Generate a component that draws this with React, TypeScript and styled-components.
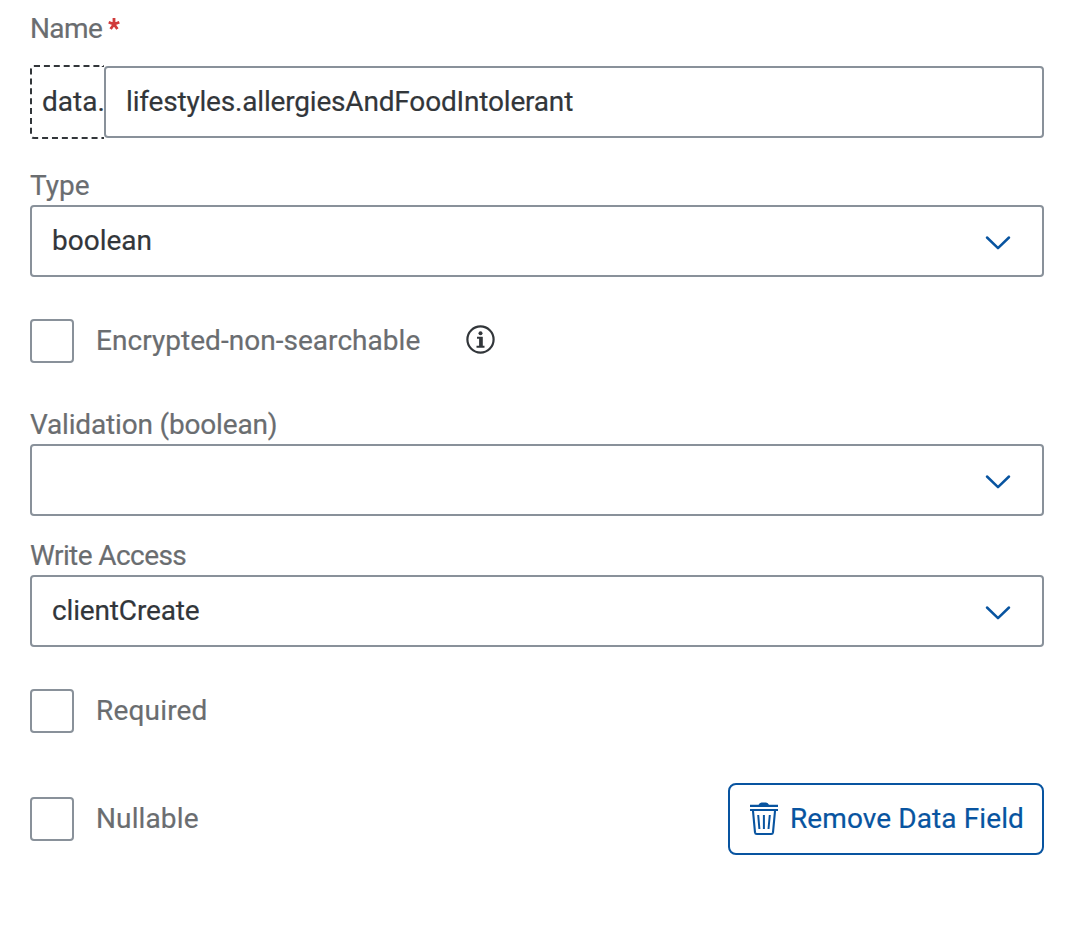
import React from "react";
import styled, { createGlobalStyle } from "styled-components";

const GlobalStyle = createGlobalStyle`
  *, *::before, *::after { box-sizing: border-box; }
  body { margin: 0; background: #fff; }
`;

const Form = styled.form`
  display: flex;
  flex-direction: column;
  width: 1078px;
  height: 946px;
  padding: 8px 34px 0 30px;
  background: #fff;
  color: #32363a;
  font: 400 28px/40px Roboto, "Liberation Sans", sans-serif;
`;

const Text = styled.span<{ $tracking?: number }>`
  letter-spacing: ${(p) => p.$tracking ?? 0}px;
  white-space: nowrap;
  -webkit-text-stroke: 0.2px currentColor;
`;

const Field = styled.div<{ $top?: number }>`
  display: flex;
  flex-direction: column;
  margin-top: ${(p) => p.$top ?? 0}px;
`;

const Label = styled.label`
  display: flex;
  height: 40px;
  padding-top: 1px;
  color: #6a6d70;
`;

const Asterisk = styled.svg`
  width: 12px;
  height: 12px;
  margin: 9px 0 0 6px;
`;

const PrefixedInput = styled.div`
  display: flex;
  align-items: center;
  height: 74px;
  margin-top: 17px;
`;

const Prefix = styled.div`
  width: 74px;
  height: 74px;
  padding: 15px 0 0 10px;
  border: 2px dashed #32363a;
  border-right: 0;
  border-radius: 4px 0 0 4px;
`;

const Control = styled.div`
  flex: 1 0 auto;
  display: flex;
  align-items: center;
  justify-content: space-between;
  height: 72px;
  padding: 0 31px 0 20px;
  border: 2px solid #89919a;
  border-radius: 4px;
  background: #fff;
`;

const Chevron = styled.svg`
  width: 26px;
  height: 16px;
  margin: 4px 0 0 auto;
`;

const CheckRow = styled.div<{ $top: number }>`
  display: flex;
  align-items: center;
  height: 44px;
  margin-top: ${(p) => p.$top}px;
  color: #6a6d70;
`;

const Box = styled.span`
  width: 44px;
  height: 44px;
  margin-right: 22px;
  border: 2px solid #89919a;
  border-radius: 4px;
`;

const CheckLabel = styled.label``;

const InfoIcon = styled.svg`
  width: 30px;
  height: 30px;
  margin: -4px 0 0 auto;
`;

const EncryptedRow = styled(CheckRow)`
  width: 465px;
`;

const Footer = styled.div`
  display: flex;
  justify-content: space-between;
  height: 72px;
  margin-top: 50px;
`;

const RemoveButton = styled.button`
  display: flex;
  align-items: center;
  width: 316px;
  height: 72px;
  padding: 0 0 0 20px;
  border: 2px solid #0854a0;
  border-radius: 8px;
  background: #fff;
  color: #0854a0;
  font: inherit;
`;

const TrashIcon = styled.svg`
  flex: none;
  width: 28px;
  height: 34px;
  margin: 0 12px 0 0;
`;

function Select({ value, tracking }: { value?: string; tracking?: number }) {
  return (
    <Control role="combobox">
      {value && <Text $tracking={tracking}>{value}</Text>}
      <Chevron viewBox="0 0 26 16" fill="none" stroke="#0854a0" strokeWidth="2.5" strokeLinecap="round" strokeLinejoin="round">
        <path d="M2 2.5 13 13.2 24 2.5" />
      </Chevron>
    </Control>
  );
}

export default function App() {
  return (
    <>
      <GlobalStyle />
      <Form>
        <Field>
          <Label>
            <Text $tracking={-0.6}>Name</Text>
            <Asterisk viewBox="0 0 12 12" stroke="#d03a3a" strokeWidth="2.8">
              <path d="M6 0v6.2M6 6.2.7 4.2M6 6.2l5.3-2M6 6.2 2.6 11M6 6.2 9.4 11" />
            </Asterisk>
          </Label>
          <PrefixedInput>
            <Prefix>
              <Text>data.</Text>
            </Prefix>
            <Control>
              <Text $tracking={-0.18}>lifestyles.allergiesAndFoodIntolerant</Text>
            </Control>
          </PrefixedInput>
        </Field>
        <Field $top={26}>
          <Label>
            <Text>Type</Text>
          </Label>
          <Select value="boolean" />
        </Field>
        <EncryptedRow $top={42}>
          <Box />
          <CheckLabel>
            <Text $tracking={0.04}>Encrypted-non-searchable</Text>
          </CheckLabel>
          <InfoIcon viewBox="-0.5 -0.5 30 30" fill="none" stroke="#32363a">
            <circle cx="15" cy="15" r="13.1" strokeWidth="2.2" />
            <circle cx="15" cy="8.8" r="2" fill="#32363a" stroke="none" />
            <path d="M11.5 13.2h4.6v8.6M11 22.2h8" strokeWidth="2" />
            <path d="M15.3 12.5v9.5" strokeWidth="3.4" />
          </InfoIcon>
        </EncryptedRow>
        <Field $top={41}>
          <Label>
            <Text $tracking={-0.17}>Validation (boolean)</Text>
          </Label>
          <Select />
        </Field>
        <Field $top={19}>
          <Label>
            <Text $tracking={-0.58}>Write Access</Text>
          </Label>
          <Select value="clientCreate" tracking={-0.15} />
        </Field>
        <CheckRow $top={42}>
          <Box />
          <CheckLabel>
            <Text $tracking={0.18}>Required</Text>
          </CheckLabel>
        </CheckRow>
        <Footer>
          <CheckRow $top={14}>
            <Box />
            <CheckLabel>
              <Text $tracking={0.12}>Nullable</Text>
            </CheckLabel>
          </CheckRow>
          <RemoveButton type="button">
            <TrashIcon viewBox="0 0 28 34" fill="none" stroke="#0854a0" strokeWidth="2">
              <path d="M0 3.8h28M0 8h28" strokeWidth="2.2" />
              <path d="M8.3 3.2Q9.5.4 11.5.4h4.5q2 0 3.2 2.8z" fill="#0854a0" stroke="none" />
              <path d="M2.9 8 5 30.4q.2 1.6 1.8 1.6h14.4q1.6 0 1.8-1.6L25.1 8" strokeWidth="2.1" />
              <path d="M8.2 13 9.4 27M13.9 13v14M19.8 13 18.5 27" />
            </TrashIcon>
            <Text $tracking={0.1}>Remove Data Field</Text>
          </RemoveButton>
        </Footer>
      </Form>
    </>
  );
}
